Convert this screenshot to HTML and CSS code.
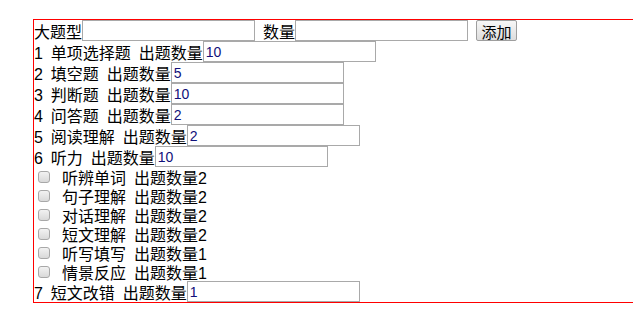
FILE: index.html
```html
<!DOCTYPE html>
<html lang="zh-CN">
<head>
  <meta charset="UTF-8" />
  <title>出题设置</title>
  <link rel="stylesheet" href="styles.css">
</head>
<body>
  <div class="paper-box">
    <!-- 添加大题 -->
    <div class="row">
      <span>大题型</span><input class="field" type="text" />
      <span class="gap">数量</span><input class="field" type="text" />
      <button class="add-btn gap">添加</button>
    </div>

    <!-- 题型列表 -->
    <div class="row"><span>1 单项选择题 出题数量</span><input class="field" type="text" value="10" /></div>
    <div class="row"><span>2 填空题 出题数量</span><input class="field" type="text" value="5" /></div>
    <div class="row"><span>3 判断题 出题数量</span><input class="field" type="text" value="10" /></div>
    <div class="row"><span>4 问答题 出题数量</span><input class="field" type="text" value="2" /></div>
    <div class="row"><span>5 阅读理解 出题数量</span><input class="field" type="text" value="2" /></div>
    <div class="row"><span>6 听力 出题数量</span><input class="field" type="text" value="10" /></div>

    <div class="sub-row"><input class="check" type="checkbox" /><span>听辨单词 出题数量2</span></div>
    <div class="sub-row"><input class="check" type="checkbox" /><span>句子理解 出题数量2</span></div>
    <div class="sub-row"><input class="check" type="checkbox" /><span>对话理解 出题数量2</span></div>
    <div class="sub-row"><input class="check" type="checkbox" /><span>短文理解 出题数量2</span></div>
    <div class="sub-row"><input class="check" type="checkbox" /><span>听写填写 出题数量1</span></div>
    <div class="sub-row"><input class="check" type="checkbox" /><span>情景反应 出题数量1</span></div>

    <div class="row"><span>7 短文改错 出题数量</span><input class="field" type="text" value="1" /></div>
  </div>
</body>
</html>
```

FILE: styles.css
```css
html, body {
  margin: 0; padding: 0;
  background: #fff;
  color: #000;
  font-family: 'Liberation Sans', 'Noto Sans CJK SC', sans-serif;
  font-size: 16px;
  overflow: hidden;
}
.paper-box {
  margin: 19px 0 0 33px;
  border: 1px solid #f00;
  border-right: none;
}
.row {
  display: flex;
  align-items: center;
  height: 21px;
  white-space: pre;
  word-spacing: 3.5px;
}
.sub-row {
  display: flex;
  align-items: center;
  height: 19px;
  white-space: pre;
  word-spacing: 3.5px;
}
.gap { margin-left: 8px; }
.field {
  box-sizing: border-box;
  width: 173px; height: 21px;
  margin: 0;
  padding: 0 2px;
  border: 1px solid #a9a9a9;
  font-family: 'Liberation Sans', sans-serif;
  font-size: 14px;
  color: #10107a;
  outline: none;
}
.add-btn {
  box-sizing: border-box;
  width: 41px; height: 21px;
  padding: 0;
  border: 1px solid #9e9e9e;
  border-radius: 2px;
  background: linear-gradient(#f7f7f7, #dddddd);
  font-family: 'Noto Sans CJK SC', sans-serif;
  font-size: 15px;
  color: #000;
}
.check {
  appearance: none;
  box-sizing: border-box;
  width: 12px; height: 12px;
  margin: 0 12px 0 4px;
  border: 1px solid #a8a8a8;
  border-radius: 3px;
  background: linear-gradient(#f2f2f2, #d9d9d9);
}
```
